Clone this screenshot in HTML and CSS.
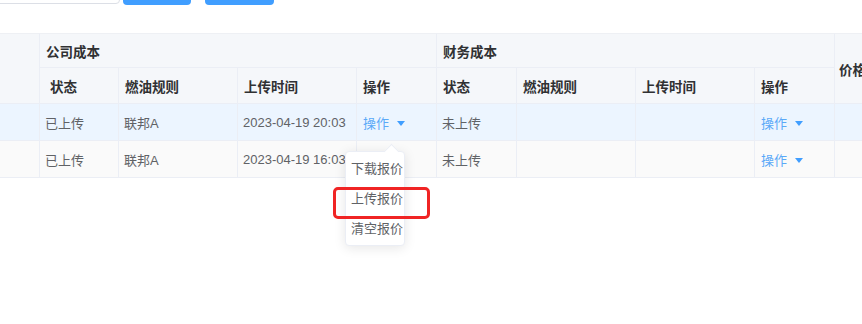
FILE: index.html
```html
<!DOCTYPE html>
<html lang="zh-CN">
<head>
    <meta charset="UTF-8">
    <meta name="viewport" content="width=device-width, initial-scale=1.0">
    <title>报价列表</title>
    <link rel="stylesheet" href="styles.css">
</head>
<body>
<div class="page">

  <div class="toolbar">
    <input class="search" type="text">
    <button class="btn" title="查询"></button>
    <button class="btn btn-second" title="重置"></button>
  </div>

  <div class="table-wrap">
    <table class="quote-table">
      <colgroup>
        <col class="c-sel">
        <col class="c-status">
        <col class="c-rule">
        <col class="c-time">
        <col class="c-op">
        <col class="c-status2">
        <col class="c-rule">
        <col class="c-time">
        <col class="c-op">
        <col class="c-price">
      </colgroup>
      <thead>
        <tr class="head-group">
          <th rowspan="2"></th>
          <th colspan="4" class="group">公司成本</th>
          <th colspan="4" class="group">财务成本</th>
          <th rowspan="2" class="price">价格</th>
        </tr>
        <tr class="head-cols">
          <th class="first-status">状态</th>
          <th>燃油规则</th>
          <th>上传时间</th>
          <th>操作</th>
          <th>状态</th>
          <th>燃油规则</th>
          <th>上传时间</th>
          <th>操作</th>
        </tr>
      </thead>
      <tbody>
        <tr class="row-hover">
          <td></td>
          <td>已上传</td>
          <td>联邦A</td>
          <td>2023-04-19 20:03</td>
          <td class="op"><span class="op-link">操作 <svg class="caret" viewBox="0 0 8 5"><path d="M0 0 L8 0 L4 5 Z"/></svg></span></td>
          <td>未上传</td>
          <td></td>
          <td></td>
          <td class="op"><span class="op-link">操作 <svg class="caret" viewBox="0 0 8 5"><path d="M0 0 L8 0 L4 5 Z"/></svg></span></td>
          <td></td>
        </tr>
        <tr class="row-stripe">
          <td></td>
          <td>已上传</td>
          <td>联邦A</td>
          <td>2023-04-19 16:03</td>
          <td class="op"></td>
          <td>未上传</td>
          <td></td>
          <td></td>
          <td class="op"><span class="op-link">操作 <svg class="caret" viewBox="0 0 8 5"><path d="M0 0 L8 0 L4 5 Z"/></svg></span></td>
          <td></td>
        </tr>
      </tbody>
    </table>

    <!-- dropdown opened from the first row -->
    <ul class="dropdown">
      <li>下载报价</li>
      <li>上传报价</li>
      <li>清空报价</li>
    </ul>
    <div class="mark"></div>
  </div>

</div>
</body>
</html>
```

FILE: styles.css
```css
* {
    margin: 0;
    padding: 0;
    box-sizing: border-box;
}
html, body {
    height: 100%;
}
body {
    background: #fff;
    font-family: "Liberation Sans", "Noto Sans CJK SC", sans-serif;
    font-size: 13px;
    color: #606266;
}
.page {
    width: 862px;
    height: 324px;
    overflow: hidden;
}

.toolbar {
    display: flex;
    align-items: flex-start;
    height: 5px;
    overflow: hidden;
}
.search {
    width: 130px;
    height: 32px;
    margin-top: -28px;
    margin-left: -10px;
    border: 1px solid #dcdfe6;
    border-radius: 4px;
    background: #fff;
}
.btn {
    width: 68px;
    height: 32px;
    margin-top: -27px;
    margin-left: 3px;
    border: none;
    border-radius: 4px;
    background: #409eff;
}
.btn-second {
    width: 69px;
    margin-left: 14px;
}

.table-wrap {
    position: relative;
    margin-top: 28px;
    height: 291px;
}
.quote-table {
    table-layout: fixed;
    border-collapse: separate;
    border-spacing: 0;
    width: 955px;
}
.c-sel { width: 40px; }
.c-status { width: 79px; }
.c-rule { width: 119px; }
.c-time { width: 119px; }
.c-op { width: 80px; }
.c-status2 { width: 80px; }
.c-price { width: 120px; }

.quote-table th,
.quote-table td {
    border-right: 1px solid #ebeef5;
    border-bottom: 1px solid #ebeef5;
    text-align: left;
    white-space: nowrap;
    overflow: hidden;
}
.quote-table th {
    background: #f5f7fa;
    color: #303133;
    font-weight: bold;
    font-size: 13.5px;
    padding: 0 6px;
}
.head-group th {
    height: 35px;
    border-top: 1px solid #eef0f4;
}
.head-cols th {
    height: 36px;
}
.quote-table th.first-status {
    padding-left: 10px;
}
.quote-table th.price {
    padding-left: 4px;
}
.quote-table td {
    height: 37px;
    padding: 0 4px 0 5px;
}
.row-hover td {
    background: #ecf5ff;
}
.row-stripe td {
    background: #fafafa;
}
.quote-table td.op {
    padding-left: 6px;
}
.op-link {
    color: #5aa9f8;
}
.caret {
    width: 8px;
    height: 5px;
    margin-left: 4px;
    vertical-align: 2px;
    fill: #409eff;
}

.dropdown {
    position: absolute;
    left: 345px;
    top: 118px;
    width: 60px;
    list-style: none;
    background: #fff;
    border: 1px solid #ebeef5;
    border-radius: 4px;
    box-shadow: 0 2px 12px rgba(0, 0, 0, 0.1);
    padding: 2px 0 1px;
}
.dropdown::before {
    content: "";
    position: absolute;
    left: 40px;
    top: -6px;
    width: 10px;
    height: 10px;
    background: #fff;
    border-left: 1px solid #ebeef5;
    border-top: 1px solid #ebeef5;
    transform: rotate(45deg);
}
.dropdown li {
    position: relative;
    height: 30px;
    line-height: 30px;
    padding-left: 5px;
    color: #606266;
    white-space: nowrap;
}
.mark {
    position: absolute;
    left: 333px;
    top: 154px;
    width: 97px;
    height: 32px;
    border: 3px solid #f02424;
    border-radius: 5px;
}
```
